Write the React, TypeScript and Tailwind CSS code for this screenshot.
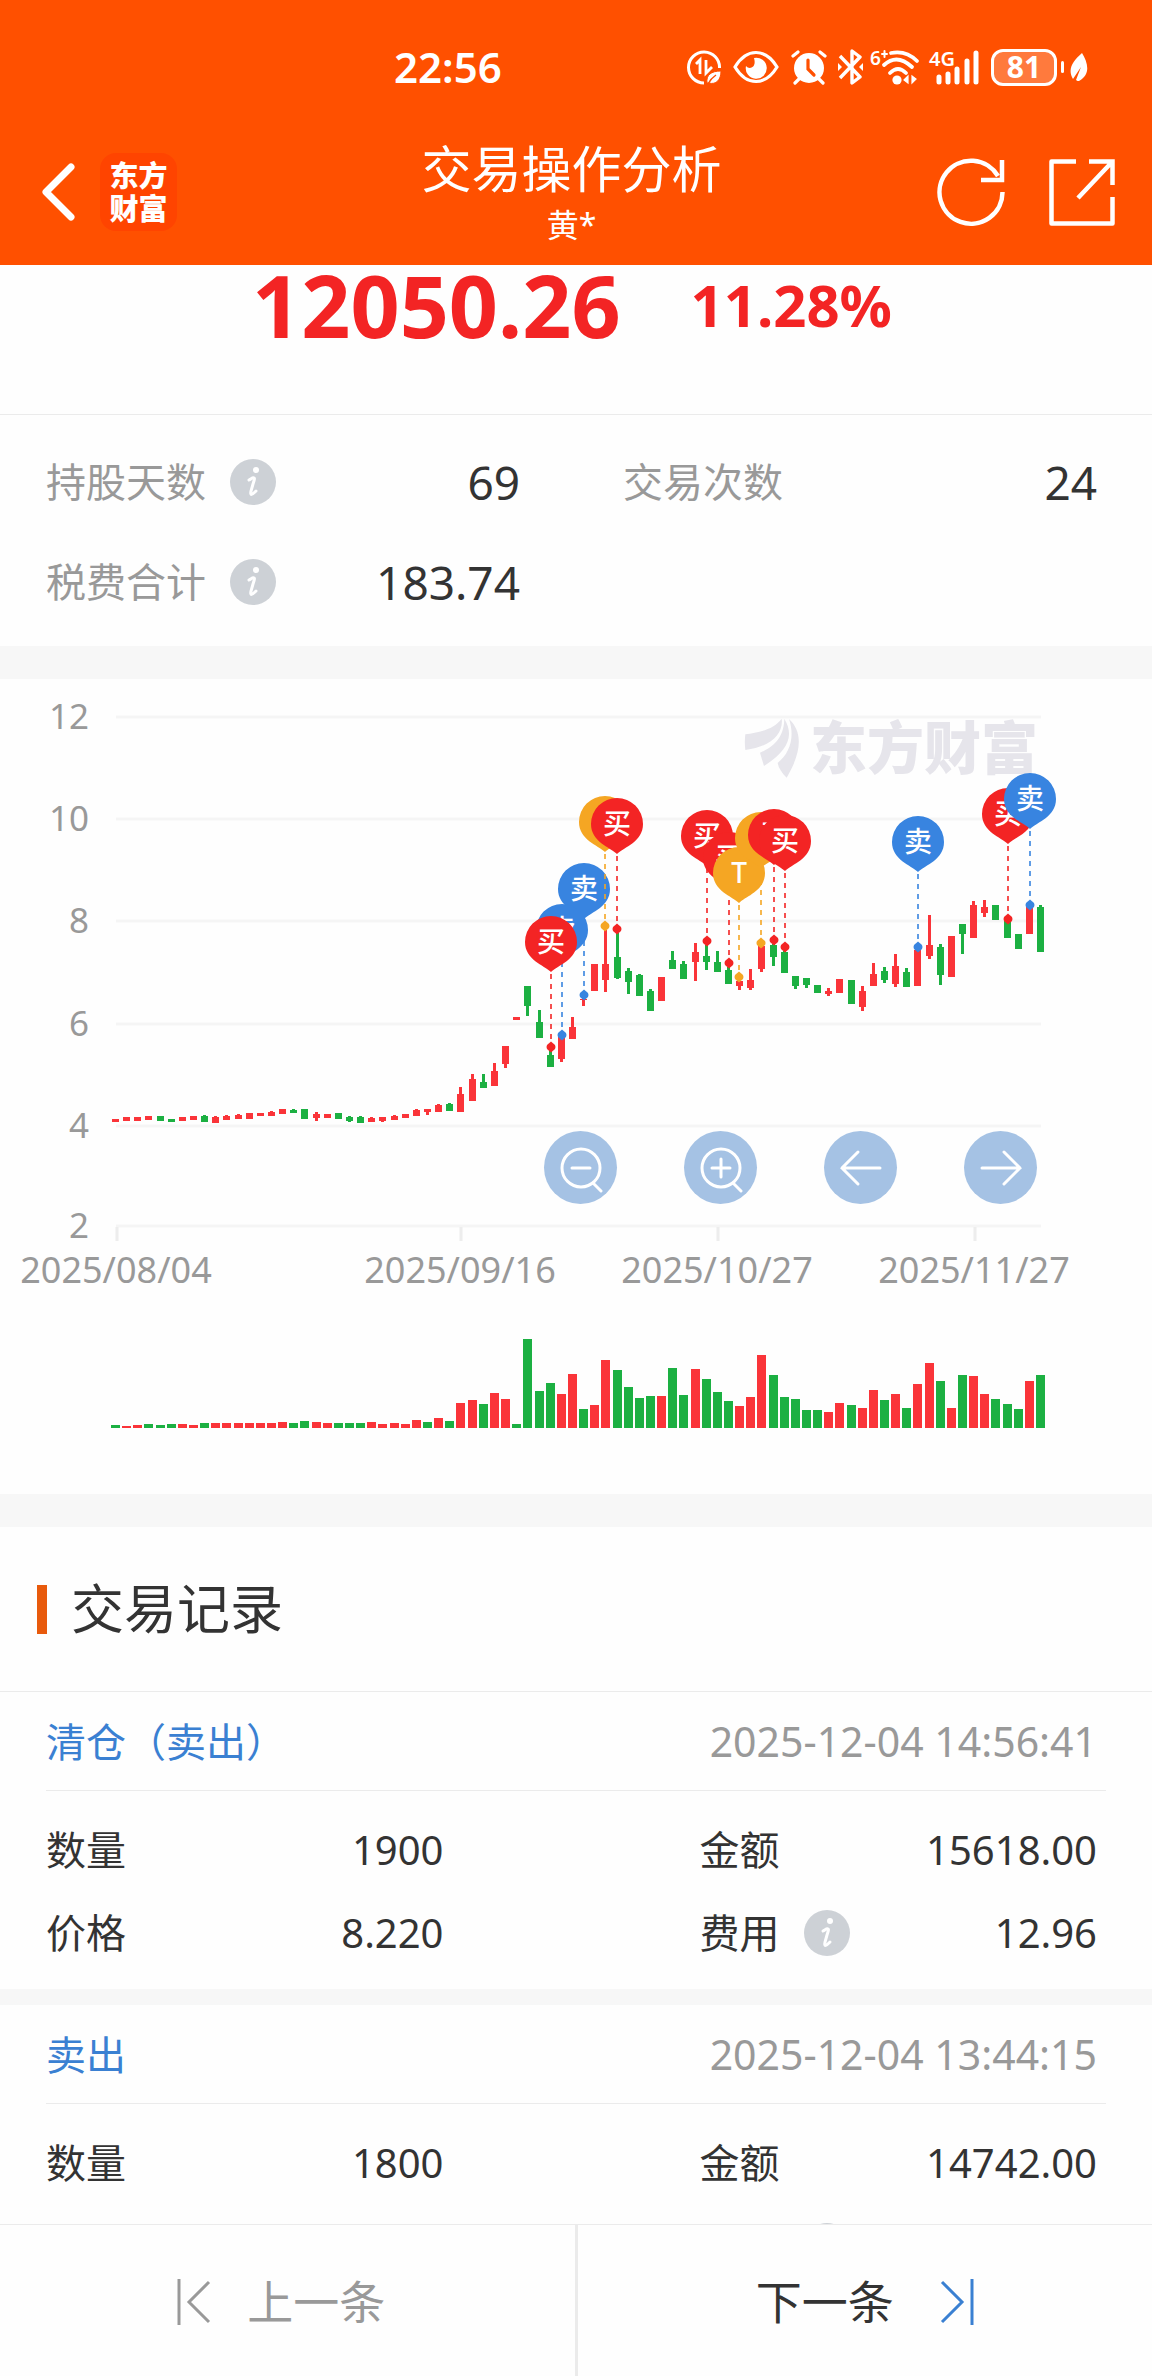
import type { ReactNode } from "react";

const RED = "#fa3439";
const GREEN = "#1cb042";

const PIN_COLORS = {
  buy: "#f32424",
  sell: "#3884e0",
  t: "#f5a623",
};

const PIN_LABELS = {
  buy: "买",
  sell: "卖",
  t: "T",
};

type Candle = [up: number, high: number, top: number, bottom: number, low: number, volume: number];

// up, high, body top, body bottom, low, volume
const CANDLES: Candle[] = [
  [1, 440, 440, 443, 443, 3],
  [1, 438, 438, 442, 442, 2],
  [1, 438, 438, 442, 442, 3],
  [1, 437, 437, 441, 441, 4],
  [0, 437, 437, 442, 442, 3],
  [0, 440, 440, 443, 443, 4],
  [1, 438, 438, 442, 442, 4],
  [1, 437, 437, 441, 441, 3],
  [0, 436, 437, 443, 443, 5],
  [1, 437, 438, 444, 444, 5],
  [1, 436, 437, 441, 441, 5],
  [1, 435, 436, 440, 440, 5],
  [1, 434, 434, 440, 440, 5],
  [1, 434, 434, 437, 437, 5],
  [1, 432, 433, 437, 437, 5],
  [1, 430, 430, 435, 435, 6],
  [0, 430, 431, 434, 434, 5],
  [0, 430, 430, 440, 440, 7],
  [1, 433, 435, 439, 442, 6],
  [1, 435, 435, 439, 439, 5],
  [0, 434, 434, 440, 440, 5],
  [0, 437, 438, 442, 443, 5],
  [0, 437, 438, 444, 444, 5],
  [1, 438, 439, 443, 443, 6],
  [1, 438, 438, 442, 443, 4],
  [1, 436, 437, 441, 441, 5],
  [1, 435, 435, 439, 439, 4],
  [1, 430, 431, 437, 437, 8],
  [1, 430, 430, 433, 436, 6],
  [1, 425, 426, 433, 433, 10],
  [0, 424, 425, 432, 432, 7],
  [1, 408, 415, 433, 433, 25],
  [1, 395, 400, 422, 422, 28],
  [0, 395, 403, 409, 409, 24],
  [1, 384, 392, 407, 407, 35],
  [1, 367, 367, 385, 389, 29],
  [1, 338, 338, 341, 341, 4],
  [0, 307, 307, 327, 337, 89],
  [0, 331, 343, 359, 359, 37],
  [0, 371, 376, 388, 388, 45],
  [1, 358, 358, 380, 383, 34],
  [1, 338, 348, 360, 360, 54],
  [1, 318, 320, 321, 327, 19],
  [1, 285, 285, 312, 312, 23],
  [1, 251, 285, 301, 313, 68],
  [0, 254, 278, 299, 300, 58],
  [0, 289, 292, 303, 315, 41],
  [0, 295, 296, 317, 317, 30],
  [0, 310, 312, 332, 332, 32],
  [1, 298, 298, 322, 322, 32],
  [0, 272, 281, 290, 290, 60],
  [0, 282, 285, 300, 300, 33],
  [1, 264, 273, 283, 302, 59],
  [0, 266, 277, 283, 291, 49],
  [0, 272, 283, 293, 293, 36],
  [0, 288, 291, 305, 305, 27],
  [1, 302, 302, 307, 311, 22],
  [1, 290, 301, 309, 311, 31],
  [1, 267, 267, 290, 293, 73],
  [0, 265, 266, 278, 287, 53],
  [0, 272, 273, 294, 294, 31],
  [0, 297, 297, 307, 310, 29],
  [0, 299, 299, 306, 309, 18],
  [0, 306, 306, 314, 314, 18],
  [1, 309, 312, 315, 317, 16],
  [1, 300, 300, 314, 314, 25],
  [0, 301, 301, 325, 325, 23],
  [1, 307, 312, 328, 332, 20],
  [1, 284, 295, 307, 307, 38],
  [0, 288, 292, 301, 304, 28],
  [1, 275, 287, 305, 308, 34],
  [0, 289, 293, 308, 308, 20],
  [1, 271, 271, 307, 307, 44],
  [1, 236, 266, 277, 280, 65],
  [0, 265, 268, 296, 306, 47],
  [1, 257, 257, 298, 298, 20],
  [0, 245, 245, 255, 275, 53],
  [1, 222, 226, 259, 259, 52],
  [1, 221, 228, 234, 238, 34],
  [0, 226, 226, 241, 241, 29],
  [0, 242, 242, 259, 259, 24],
  [0, 255, 255, 270, 270, 19],
  [1, 228, 228, 255, 255, 47],
  [0, 226, 228, 273, 273, 53],
];

// days whose volume bar is green under a red candle
const FALLING_VOLUME = [0, 3, 28, 36, 42];

const PINS: { kind: keyof typeof PIN_COLORS; x: number; y: number; dot: number }[] = [
  { kind: "sell", x: 584, y: 210, dot: 316 },
  { kind: "sell", x: 562, y: 251, dot: 356 },
  { kind: "buy", x: 551, y: 263, dot: 368 },
  { kind: "t", x: 605, y: 143, dot: 247 },
  { kind: "buy", x: 617, y: 145, dot: 250 },
  { kind: "buy", x: 707, y: 157, dot: 262 },
  { kind: "buy", x: 729, y: 179, dot: 284 },
  { kind: "t", x: 739, y: 194, dot: 298 },
  { kind: "t", x: 761, y: 159, dot: 264 },
  { kind: "buy", x: 774, y: 156, dot: 261 },
  { kind: "buy", x: 785, y: 162, dot: 268 },
  { kind: "sell", x: 918, y: 163, dot: 268 },
  { kind: "buy", x: 1008, y: 135, dot: 240 },
  { kind: "sell", x: 1030, y: 120, dot: 226 },
];

const Y_AXIS = [
  { label: "12", y: 38 },
  { label: "10", y: 140 },
  { label: "8", y: 242 },
  { label: "6", y: 345 },
  { label: "4", y: 447 },
  { label: "2", y: 547 },
];

const X_AXIS = [
  { label: "2025/08/04", x: 117 },
  { label: "2025/09/16", x: 461 },
  { label: "2025/10/27", x: 718 },
  { label: "2025/11/27", x: 975 },
];

const RECORDS = [
  {
    title: "清仓（卖出）",
    time: "2025-12-04 14:56:41",
    amount: "1900",
    total: "15618.00",
    price: "8.220",
    fee: "12.96",
  },
  {
    title: "卖出",
    time: "2025-12-04 13:44:15",
    amount: "1800",
    total: "14742.00",
    price: "8.190",
    fee: "12.30",
  },
];

function StatusIcons() {
  return (
    <div className="flex h-[42px] items-center text-white">
      <svg width="34" height="36" viewBox="0 0 34 36" fill="none" stroke="currentColor" strokeWidth="3">
        <path d="M32.500 19A15.500 15.500 0 1 0 17 34" />
        <path d="M9 15l4-4v14M19 11v13l6-6" strokeWidth="2.800" />
        <path d="M20 34c-1-8 4-12 14-12 0 9-5 14-12 12z" fill="currentColor" stroke="#ff5000" strokeWidth="1" />
        <path d="M21 35c2-4 5-7 8-9" stroke="#ff5000" strokeWidth="1.500" />
      </svg>
      <svg className="ml-3" width="46" height="36" viewBox="0 0 46 36" fill="none">
        <path d="M2 18C8 8 15 3.500 23 3.500S38 8 44 18C38 28 31 32.500 23 32.500S8 28 2 18z" stroke="currentColor" strokeWidth="3.200" />
        <path d="M21 9a10.500 10.500 0 1 1-8 8c3 4 11 2 8-8z" fill="currentColor" />
      </svg>
      <svg className="ml-3" width="36" height="36" viewBox="0 0 36 36" fill="none" stroke="currentColor" strokeWidth="3.200" strokeLinecap="round">
        <circle cx="18" cy="19" r="15" fill="currentColor" stroke="none" />
        <path d="M2 7l5-4M34 7l-5-4M8 30l-4 4M28 30l4 4" />
        <path d="M17 11v9l6 6" stroke="#ff5000" />
      </svg>
      <svg className="ml-[11px]" width="25" height="36" viewBox="0 0 25 36" fill="none" stroke="currentColor" strokeWidth="3.400" strokeLinejoin="round">
        <path d="M2 7l20 21-8 6V2l8 6L2 29" />
        <path d="M0 14l4 4-4 4zM25 14l-4 4 4 4z" fill="currentColor" stroke="none" />
      </svg>
      <svg className="ml-2 overflow-visible" width="48" height="36" viewBox="0 0 48 36" fill="none" stroke="currentColor" strokeWidth="3.800" strokeLinecap="round">
        <text x="-1" y="16" fontSize="19" fontWeight="600" fill="currentColor" stroke="none">6</text>
        <path d="M11 5h5M13.500 2v6" strokeWidth="2" />
        <path d="M20 4q15-3 26 8M13 16q13-12 28 2M19 24q8-8 16 0" />
        <circle cx="26" cy="31" r="4.600" fill="currentColor" stroke="none" />
        <path d="M37 27v7l-4-3zM41 27v7l4-4z" fill="currentColor" strokeWidth="1.200" />
      </svg>
      <svg className="ml-2.5 overflow-visible" width="52" height="36" viewBox="0 0 52 36" fill="none" stroke="currentColor" strokeWidth="5" strokeLinecap="round">
        <text x="0" y="17" fontSize="20" fontWeight="600" fill="currentColor" stroke="none">4G</text>
        <path d="M10 28v5M19 25v8M28 20v13M38 12v21M47 4v29" />
      </svg>
      <div className="ml-2.5 flex h-[37px] w-[66px] items-center justify-center rounded-xl border-[3px] border-white bg-[#ff7a3d] text-[30px] leading-none font-bold">
        81
      </div>
      <div className="ml-1 h-3 w-[3px] rounded-full bg-white" />
      <svg className="ml-1.5" width="18" height="30" viewBox="0 0 18 30">
        <path d="M12 1c6 10 9 21-3 28-1 0-2 0-3-1l5-13-8 12C-3 17 3 9 12 1z" fill="currentColor" />
      </svg>
    </div>
  );
}

function InfoButton() {
  return (
    <button
      type="button"
      aria-label="说明"
      className="flex size-[46px] shrink-0 items-center justify-center rounded-full bg-[#cdd1d6] text-white"
    >
      <svg width="20" height="32" viewBox="0 0 20 32" fill="none" stroke="currentColor" strokeLinecap="round">
        <circle cx="13" cy="4" r="3" fill="currentColor" stroke="none" />
        <path d="M6 14c2-1 4-3 5-2 1 0 0 3-1 6l-2 7c-1 5 1 4 5 0" strokeWidth="3" />
      </svg>
    </button>
  );
}

function Field({
  label,
  value,
  info,
  large,
}: {
  label: string;
  value: string;
  info?: boolean;
  large?: boolean;
}) {
  return (
    <div className="flex h-[60px] items-center justify-between">
      <dt className="flex items-center gap-6">
        <span className={large ? "text-[40px] text-[#999999]" : "text-[40px]"}>{label}</span>
        {info && <InfoButton />}
      </dt>
      <dd className={large ? "text-[46px]" : "text-[40px]"}>{value}</dd>
    </div>
  );
}

function ChartButton({ label, children }: { label: string; children: ReactNode }) {
  return (
    <button
      type="button"
      aria-label={label}
      className="flex size-[73px] items-center justify-center rounded-full bg-[#a5c2e4] text-white"
    >
      <svg width="44" height="50" viewBox="0 -3 44 50" fill="none" stroke="currentColor" strokeWidth="3" strokeLinecap="round">
        {children}
      </svg>
    </button>
  );
}

function Chart() {
  return (
    <section className="relative">
      <svg viewBox="0 0 1152 815" className="block w-full">
        {Y_AXIS.map((tick) => (
          <g key={tick.label}>
            <path d={`M116 ${tick.y}H1041`} stroke="#f5f5f5" strokeWidth="3" />
            <text x="89" y={tick.y + 12} textAnchor="end" fontSize="35" fill="#999999">
              {tick.label}
            </text>
          </g>
        ))}
        {X_AXIS.map((tick) => (
          <g key={tick.label}>
            <path d={`M${tick.x} 548v14`} stroke="#ededed" strokeWidth="3" />
            <text x={tick.x - 1} y="604" textAnchor="middle" fontSize="36" fill="#999999">
              {tick.label}
            </text>
          </g>
        ))}

        <g fill="#e6e5eb">
          <g transform="translate(640 1) scale(0.3333)">
            <path d="M316 163c40-6 85-14 109-47 6 42-28 84-109 94-2-16-2-30 0-47z" />
            <path d="M360 218c32-14 72-38 73-102 34 56 4 100-61 142-4-14-8-26-12-40z" />
            <path d="M447 117c37 34 44 90-7 176-14-14-24-28-27-44 38-30 52-80 34-132z" />
          </g>
          <text x="810" y="90" fontSize="57" fontWeight="900">
            东方财富
          </text>
        </g>

        {CANDLES.map(([up, high, top, bottom, low, volume], i) => {
          const x = Math.round(111 + i * 11.145);
          return (
            <g key={i} fill={up ? RED : GREEN}>
              <rect x={x + 3} y={high} width="3" height={low - high} />
              <rect x={x + 1} y={top} width="7" height={bottom - top} />
              <rect
                x={x}
                y={749 - volume}
                width="9"
                height={volume}
                fill={FALLING_VOLUME.includes(i) ? GREEN : undefined}
              />
            </g>
          );
        })}

        {PINS.map((pin) => (
          <g key={pin.x} fill={PIN_COLORS[pin.kind]}>
            <path
              d={`M${pin.x} ${pin.y + 32}V${pin.dot}`}
              stroke={PIN_COLORS[pin.kind]}
              strokeWidth="2"
              strokeDasharray="5 5"
              opacity="0.8"
            />
            <path
              transform={`translate(${pin.x} ${pin.dot})`}
              d="M0-5.500L4-2Q5 0 4 2L0 5.500L-4 2Q-5 0-4-2z"
            />
            <path
              transform={`translate(${pin.x} ${pin.y})`}
              d="M0 30C-7 23-26 18-26 0A26 26 0 0 1 26 0C26 18 7 23 0 30z"
            />
            <text x={pin.x} y={pin.y + 10} textAnchor="middle" fontSize="28" fontWeight="500" fill="#fff">
              {PIN_LABELS[pin.kind]}
            </text>
          </g>
        ))}
      </svg>

      <div className="absolute top-[452px] right-[115px] flex gap-[67px]">
        <ChartButton label="缩小">
          <circle cx="22" cy="22" r="19" />
          <path d="M13 22h18M34 37l8 8" />
        </ChartButton>
        <ChartButton label="放大">
          <circle cx="22" cy="22" r="19" />
          <path d="M13 22h18M22 13v18M34 37l8 8" />
        </ChartButton>
        <ChartButton label="向左">
          <path d="M41 22H3M19 6L3 22l16 16" />
        </ChartButton>
        <ChartButton label="向右">
          <path d="M3 22h38M25 6l16 16-16 16" />
        </ChartButton>
      </div>
    </section>
  );
}

export default function App() {
  return (
    <div className="flex h-screen flex-col bg-[#fefefe] font-['Noto_Sans','Noto_Sans_CJK_SC',sans-serif] text-[#333333]">
      <header className="bg-[#ff5000] text-white">
        <div className="flex h-[88px] items-end justify-between pr-[64px] pl-[394px]">
          <time className="text-[42px] leading-[42px] font-semibold">22:56</time>
          <StatusIcons />
        </div>
        <div className="grid h-[177px] grid-cols-[1fr_auto_1fr] items-center pt-[30px] pr-[37px] pl-7">
          <div className="flex items-center">
            <button type="button" aria-label="返回">
              <svg width="56" height="60" viewBox="0 0 56 60" fill="none" stroke="currentColor" strokeWidth="7" strokeLinecap="round" strokeLinejoin="round">
                <path d="M43 5L18 30l25 25" />
              </svg>
            </button>
            <a
              href="#home"
              className="ml-4 flex h-[78px] w-[77px] flex-col items-center justify-center rounded-2xl bg-[#ff4400] text-[29px] leading-[33px] font-black"
            >
              <span>东方</span>
              <span>财富</span>
            </a>
          </div>
          <div className="text-center">
            <h1 className="text-[50px] leading-[60px]">交易操作分析</h1>
            <p className="mt-1.5 text-[32px] leading-10">黄*</p>
          </div>
          <div className="flex justify-end gap-[44px]">
            <button type="button" aria-label="刷新">
              <svg width="68" height="68" viewBox="0 0 68 68" fill="none" stroke="currentColor" strokeWidth="4.500">
                <path d="M65.500 34A31.500 31.500 0 1 1 61 18" />
                <path d="M65 2v20H44" />
              </svg>
            </button>
            <button type="button" aria-label="分享">
              <svg width="66" height="68" viewBox="0 0 66 68" fill="none" stroke="currentColor" strokeWidth="4.500" strokeLinejoin="round">
                <path d="M27 3.500H2.500v62h61V39" />
                <path d="M40 3.500h23.500V27M63 4L29 40" strokeLinejoin="miter" />
              </svg>
            </button>
          </div>
        </div>
      </header>

      <main className="min-h-0 flex-1 overflow-hidden">
        <section className="flex items-center justify-center gap-[70px] border-b border-[#ebebeb] pr-2 pb-[69px] text-[#f32424]">
          <strong className="text-[86px] leading-[80px] font-bold">12050.26</strong>
          <span className="text-[58px] leading-[80px] font-bold">11.28%</span>
        </section>

        <dl className="grid grid-cols-2 gap-x-[103px] gap-y-10 pt-[37px] pr-[55px] pb-[34px] pl-[46px]">
          <Field label="持股天数" value="69" info large />
          <Field label="交易次数" value="24" large />
          <Field label="税费合计" value="183.74" info large />
        </dl>
        <div className="h-[33px] bg-[#f7f7f7]" />

        <Chart />
        <div className="h-[33px] bg-[#f7f7f7]" />

        <div className="flex items-center gap-6 border-b border-[#ebebeb] py-[52px] pl-[37px]">
          <div className="h-[49px] w-[10px] bg-[#e85a0c]" />
          <h2 className="text-[53px] leading-[60px]">交易记录</h2>
        </div>

        {RECORDS.map((record) => (
          <article key={record.time} className="border-b-[16px] border-[#f7f7f7]">
            <div className="mx-[46px] flex h-[99px] items-center justify-between border-b border-[#ebebeb] pt-0.5 pr-[9px]">
              <h3 className="text-[40px] text-[#3a80d2]">{record.title}</h3>
              <time className="text-[41px] text-[#999999]">{record.time}</time>
            </div>
            <dl className="grid grid-cols-2 gap-x-[256px] gap-y-[23px] pt-[29px] pr-[55px] pb-[26px] pl-[46px]">
              <Field label="数量" value={record.amount} />
              <Field label="金额" value={record.total} />
              <Field label="价格" value={record.price} />
              <Field label="费用" value={record.fee} info />
            </dl>
          </article>
        ))}
      </main>

      <footer className="grid h-[152px] grid-cols-[1fr_3px_1fr] border-t border-[#ebebeb] text-[46px]">
        <button type="button" className="flex items-center justify-center gap-9 pt-0.5 pr-3 text-[#999999]">
          <svg width="34" height="48" viewBox="0 0 34 48" fill="none" stroke="currentColor" strokeWidth="3">
            <path d="M2 1v46M32 4L12 24l20 20" />
          </svg>
          上一条
        </button>
        <div className="bg-[#ebebeb]" />
        <button type="button" className="flex items-center justify-center gap-[46px] pt-0.5">
          下一条
          <svg width="34" height="48" viewBox="0 0 34 48" fill="none" stroke="#3a80d2" strokeWidth="3">
            <path d="M32 1v46M2 4l20 20L2 44" />
          </svg>
        </button>
      </footer>
    </div>
  );
}
